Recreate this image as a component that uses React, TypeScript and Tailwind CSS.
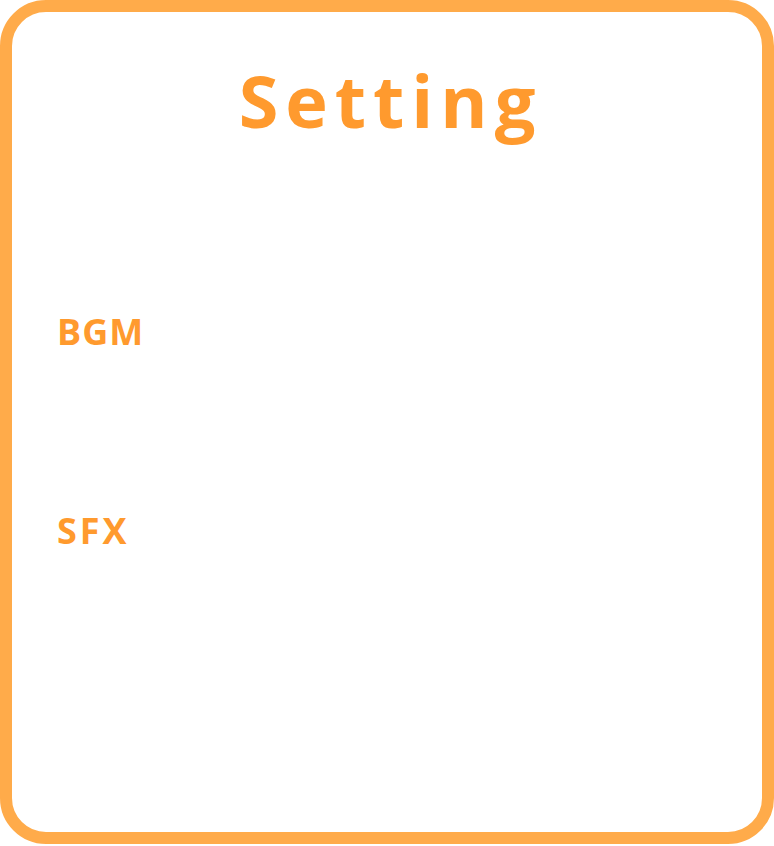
export default function App() {
  return (
    <div className="w-[774px] h-[846px] bg-white">
      <div className="w-[774px] h-[844px] rounded-[46px] border-[12px] border-[#ffab4a] bg-white flex flex-col font-['Open_Sans',sans-serif] text-[#ff9a2e]">
        <h1 className="mt-[52px] text-center text-[72px] leading-[72px] font-bold tracking-[7px] pl-[7px]">
          Setting
        </h1>
        <div className="pl-[45px] mt-[176px] flex flex-col">
          <div className="text-[36px] leading-[40px] font-bold tracking-[1px]">BGM</div>
          <div className="mt-[159px] text-[36px] leading-[40px] font-bold tracking-[3px]">SFX</div>
        </div>
      </div>
    </div>
  );
}
